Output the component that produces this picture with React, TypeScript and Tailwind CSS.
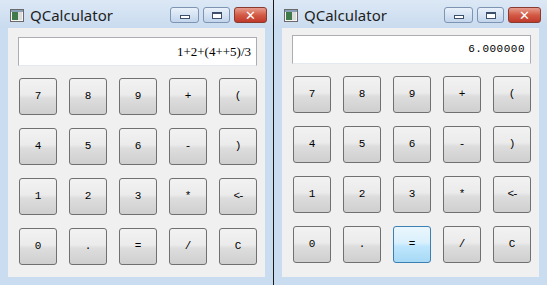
import React from "react";

const keys = ["7", "8", "9", "+", "(", "4", "5", "6", "-", ")", "1", "2", "3", "*", "<-", "0", ".", "=", "/", "C"];

function AppIcon() {
  return (
    <svg width="14" height="13" viewBox="0 0 14 13">
      <rect x="0.5" y="0.5" width="13" height="12" fill="#f4f4f4" stroke="#6a6a6a" />
      <rect x="2" y="3" width="6" height="8" fill="#3f7a4a" />
      <rect x="8" y="3" width="4" height="8" fill="#dcdcdc" />
      <rect x="1" y="1" width="12" height="2" fill="#8aa0b8" />
    </svg>
  );
}

function CaptionButtons() {
  return (
    <div className="flex items-start gap-[4px] pt-[7px]">
      <div className="w-[29px] h-[16px] rounded-[3px] border border-[#7d94b3] bg-gradient-to-b from-[#e9f1fa] to-[#c2d5ec] flex items-center justify-center">
        <div className="w-[10px] h-[4px] border border-[#3c4f6b] bg-white mt-[4px]" />
      </div>
      <div className="w-[27px] h-[16px] rounded-[3px] border border-[#7d94b3] bg-gradient-to-b from-[#e9f1fa] to-[#c2d5ec] flex items-center justify-center">
        <div className="w-[10px] h-[7px] border border-[#3c4f6b] border-t-2 bg-white" />
      </div>
      <div className="w-[33px] h-[16px] rounded-[3px] border border-[#8a3b30] bg-gradient-to-b from-[#e69c8e] via-[#d35a45] to-[#c0392b] flex items-center justify-center">
        <span className="text-white text-[13px] font-bold leading-none [font-family:'DejaVu_Sans',sans-serif]">✕</span>
      </div>
    </div>
  );
}

function Key({ label, hover }: { label: string; hover?: boolean }) {
  return (
    <div
      className={
        hover
          ? "w-[38px] h-[37px] rounded-[3px] border border-[#3c7fb1] bg-[linear-gradient(#eaf6fd_0%,#d9f0fc_45%,#bee6fd_55%,#a7d9f5_100%)] flex items-center justify-center"
          : "w-[38px] h-[37px] rounded-[3px] border border-[#707070] bg-[linear-gradient(#f2f2f2_0%,#ebebeb_45%,#dddddd_55%,#cfcfcf_100%)] flex items-center justify-center"
      }
    >
      <span
        className={
          label === "<-"
            ? "text-[11px] text-black tracking-[-2px] [font-family:'Liberation_Mono',monospace]"
            : "text-[11px] text-black [font-family:'Liberation_Mono',monospace]"
        }
      >
        {label}
      </span>
    </div>
  );
}

function Window({ display, mono, hoverKey, top }: { display: string; mono?: boolean; hoverKey?: string; top: string }) {
  return (
    <div className="w-[274px] h-[285px] flex flex-col bg-[#bcd2ea] border-r border-[#1a1a1a]">
      <div className="h-[28px] flex items-start justify-between pl-[10px] pr-[6px] bg-gradient-to-b from-[#dce8f5] to-[#c9dbef]">
        <div className="flex items-center gap-[6px] pt-[8px]">
          <AppIcon />
          <span className="text-[15px] leading-none text-[#1e1e1e] [font-family:'Noto_Sans',sans-serif]">QCalculator</span>
        </div>
        <CaptionButtons />
      </div>
      <div className="flex-1 px-[8px] pb-[8px] bg-[#cadcf0]">
        <div className={`h-full bg-[#f0f0f0] pl-[10px] pr-[8px] ${top}`}>
          <div className="h-[29px] bg-white border border-[#abadb3] border-b-[#e3e9ef] flex items-center justify-end pr-[5px]">
            <span
              className={
                mono
                  ? "text-[11px] text-black tracking-[0.5px] [font-family:'Liberation_Mono',monospace]"
                  : "text-[13px] text-black [font-family:'Liberation_Serif',serif]"
              }
            >
              {display}
            </span>
          </div>
          <div className="grid grid-cols-[repeat(5,38px)] gap-x-[12px] gap-y-[13px] mt-[12px] pl-[1px]">
            {keys.map((k) => (
              <Key key={k} label={k} hover={k === hoverKey} />
            ))}
          </div>
        </div>
      </div>
    </div>
  );
}

export default function App() {
  return (
    <div className="w-[547px] h-[285px] flex bg-[#1a1a1a] overflow-hidden">
      <Window display="1+2+(4++5)/3" top="pt-[9px]" />
      <Window display="6.000000" mono hoverKey="=" top="pt-[7px]" />
    </div>
  );
}
